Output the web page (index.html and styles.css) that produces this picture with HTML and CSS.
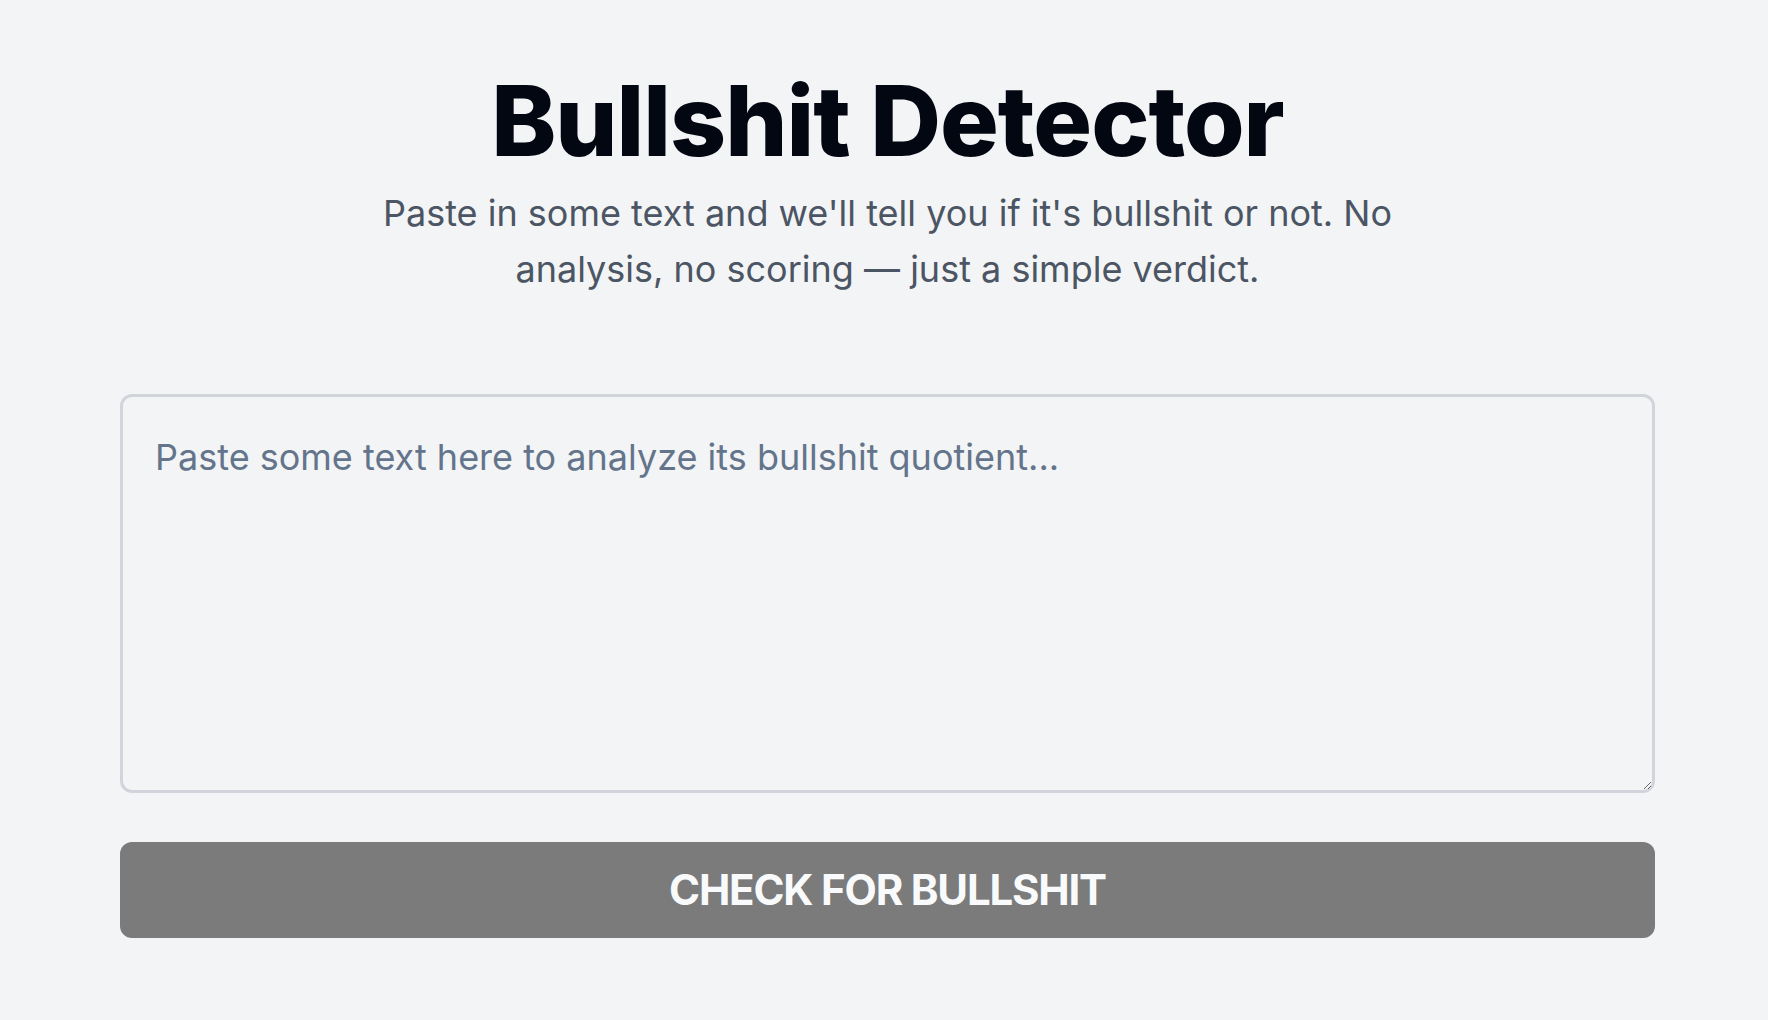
FILE: index.html
```html
<!DOCTYPE html>
<html lang="en">
<head>
<meta charset="utf-8">
<title>Bullshit Detector</title>
<link rel="stylesheet" href="styles.css">
</head>
<body>
<main class="page">
  <header class="hero">
    <h1 class="title">Bullshit Detector</h1>
    <p class="subtitle">Paste in some text and we'll tell you if it's bullshit or not. No analysis, no scoring — just a simple verdict.</p>
  </header>
  <section class="form">
    <textarea class="input" placeholder="Paste some text here to analyze its bullshit quotient..."></textarea>
    <button class="check" type="button">CHECK FOR BULLSHIT</button>
  </section>
</main>
</body>
</html>
```
FILE: styles.css
```css
html, body {
  margin: 0;
  padding: 0;
  background: #f3f4f6;
}
body {
  font-family: Inter, "Noto Sans", sans-serif;
}
.page {
  padding: 72px 113px 40px 120px;
  display: flex;
  flex-direction: column;
}
.hero {
  display: flex;
  flex-direction: column;
  align-items: center;
  text-align: center;
}
.title {
  margin: 0;
  font-size: 98px;
  line-height: 98px;
  font-weight: 800;
  letter-spacing: -1px;
  color: #030712;
}
.subtitle {
  margin: 15px 0 0;
  max-width: 1060px;
  font-size: 36px;
  line-height: 56px;
  color: #4b5563;
}
.form {
  margin-top: 97px;
  display: flex;
  flex-direction: column;
  gap: 49px;
}
.input {
  box-sizing: border-box;
  width: 100%;
  height: 399px;
  padding: 32px 32px 30px;
  border: 3px solid #d1d5db;
  border-radius: 12px;
  background: #f3f4f6;
  font-family: Inter, "Noto Sans", sans-serif;
  font-size: 36px;
  line-height: 56px;
  color: #111827;
  outline: none;
}
.input::placeholder {
  color: #64748b;
}
.check {
  height: 96px;
  padding: 0 0 2px;
  border: 0;
  border-radius: 12px;
  background: #7b7b7b;
  color: #f9fafb;
  font-family: Inter, "Noto Sans", sans-serif;
  font-size: 42px;
  font-weight: 700;
  letter-spacing: -1.2px;
}
```
